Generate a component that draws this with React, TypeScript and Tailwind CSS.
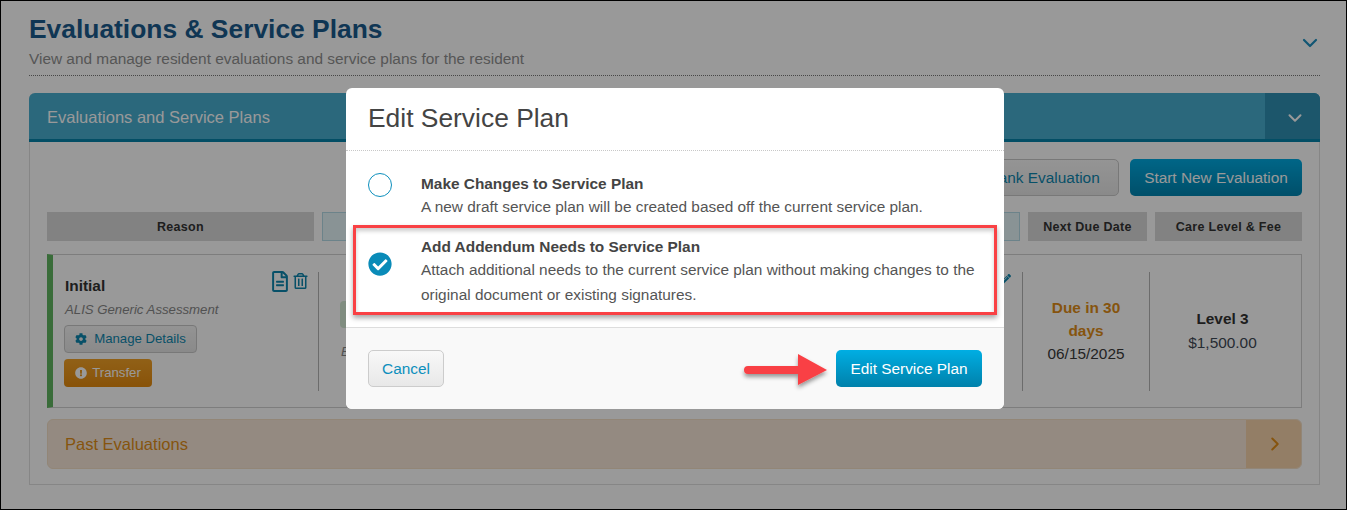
import React from 'react';
import { ChevronDown, ChevronRight } from 'lucide-react';
import { FaCheckCircle, FaCog, FaExclamationCircle, FaPencilAlt, FaRegFileAlt, FaRegTrashAlt } from 'react-icons/fa';

const HeaderCell = ({ className, children }: { className: string; children?: React.ReactNode }) => (
    <div className={`flex items-center justify-center bg-[#d9d9d9] pt-px text-[12.5px] font-bold tracking-[0.3px] text-[#333] ${className}`}>
        {children}
    </div>
);

const RedArrow = () => (
    <svg width="90" height="40" viewBox="0 0 90 40" className="absolute left-[740px] top-[349px] overflow-visible">
        <defs>
            <filter id="arrow-shadow" x="-20%" y="-40%" width="140%" height="200%">
                <feDropShadow dx="0" dy="3" stdDeviation="2" floodColor="#000" floodOpacity="0.4" />
            </filter>
        </defs>
        <path
            d="M7 16 H57 V4 L86 20 L57 35 V24 H7 A4 4 0 0 1 7 16 Z"
            fill="#f94144"
            filter="url(#arrow-shadow)"
        />
    </svg>
);

export default function App() {
    return (
        <div className="relative h-[510px] w-[1347px] overflow-hidden border border-black bg-white font-['Liberation_Sans',Arial,sans-serif] text-[#444]">
            {/* page behind the dialog */}
            <div className="pl-[28px] pr-[26px] pt-[12px]">
                <div className="relative border-b border-dotted border-[#777] pb-[6px]">
                    <h1 className="text-[26.4px] font-bold leading-[33px] text-[#1a5a8c]">Evaluations &amp; Service Plans</h1>
                    <p className="mt-[3px] text-[15.4px] leading-[20px] text-[#8f8f8f]">View and manage resident evaluations and service plans for the resident</p>
                    <ChevronDown className="absolute right-[-2px] top-[18px] h-[24px] w-[24px] text-[#1d8fc0]" strokeWidth={2.2} />
                </div>

                <div className="mt-[17px] h-[392px] rounded-t-[6px] border border-t-0 border-[#e0e0e0]">
                    <div className="-mx-px flex h-[49px] rounded-t-[6px] border-b-[3px] border-[#0583a8] bg-[#48adcf] text-white">
                        <div className="flex flex-1 items-center pl-[18px] pt-[2px] text-[16.5px]">Evaluations and Service Plans</div>
                        <div className="flex w-[55px] items-center justify-center rounded-tr-[6px] bg-[#2f8fb2]">
                            <ChevronDown className="ml-[5px] mt-[4px] h-[22px] w-[22px]" strokeWidth={2.2} />
                        </div>
                    </div>

                    <div className="px-[17px]">
                        <div className="mt-[17px] flex justify-end gap-[11px]">
                            <button className="h-[37px] w-[190px] rounded-[5px] border border-[#c8c8c8] bg-gradient-to-b from-[#f8f8f8] to-[#e6e6e6] text-[15.4px] text-[#0d86ae]">Start Blank Evaluation</button>
                            <button className="h-[37px] w-[172px] rounded-[5px] bg-gradient-to-b from-[#00aae2] to-[#0084b0] text-[15.4px] text-white">Start New Evaluation</button>
                        </div>

                        <div className="mt-[16px] flex h-[29px] gap-[8px]">
                            <HeaderCell className="w-[267px]">Reason</HeaderCell>
                            <HeaderCell className="flex-1 border border-[#b5dbe6] bg-[#e5f5f8]">Status</HeaderCell>
                            <HeaderCell className="w-[119px]">Next Due Date</HeaderCell>
                            <HeaderCell className="w-[147px]">Care Level &amp; Fee</HeaderCell>
                        </div>

                        <div className="mt-[13px] flex h-[154px] items-center border border-l-[6px] border-[#d0d0d0] border-l-[#5fb55f] pr-[9px]">
                            <div className="relative flex h-[119px] w-[266px] flex-col items-start border-r border-[#b5b5b5] pl-[12px]">
                                <div className="absolute right-[10px] top-[-1px] flex items-start gap-[5px] text-[#0d86ae]">
                                    <FaRegFileAlt className="h-[21px] w-[16px]" />
                                    <FaRegTrashAlt className="mt-[2px] h-[16px] w-[15px]" />
                                </div>
                                <div className="mt-[5px] text-[15.4px] font-bold leading-[18px] text-[#333]">Initial</div>
                                <div className="mt-[6px] text-[13.2px] italic leading-[18px] text-[#888]">ALIS Generic Assessment</div>
                                <button className="-ml-px mt-[6px] flex h-[28px] w-[133px] items-center justify-center gap-[7px] rounded-[4px] border border-[#c8c8c8] bg-gradient-to-b from-[#f6f6f6] to-[#e6e6e6] text-[13.2px] text-[#0d86ae]">
                                    <FaCog className="h-[12px] w-[12px]" />
                                    Manage Details
                                </button>
                                <button className="-ml-px mt-[6px] flex h-[28px] w-[88px] items-center justify-center gap-[5px] rounded-[4px] bg-gradient-to-b from-[#f1a126] to-[#e38a0d] text-[13.2px] text-white">
                                    <FaExclamationCircle className="h-[12px] w-[12px]" />
                                    Transfer
                                </button>
                            </div>
                            <div className="relative h-[119px] flex-1">
                                <div className="absolute right-[11px] top-[2px]">
                                    <FaPencilAlt className="h-[10px] w-[10px] text-[#0d86ae]" />
                                </div>
                                <div className="ml-[21px] mt-[29px] h-[27px] w-[60px] rounded-[4px] bg-[#d5ecd5]" />
                                <div className="ml-[22px] mt-[14px] text-[13.2px] italic text-[#888]">Evaluation</div>
                            </div>
                            <div className="flex h-[119px] w-[128px] flex-col items-center justify-center border-x border-[#b5b5b5] pb-[2px] text-center text-[15.4px] leading-[23px]">
                                <div className="font-bold text-[#e08d18]">Due in 30<br />days</div>
                                <div className="text-[#3a3a3a]">06/15/2025</div>
                            </div>
                            <div className="flex h-[119px] w-[142px] flex-col items-center justify-center pl-[3px] text-[15.4px] leading-[24px]">
                                <div className="font-bold text-[#333]">Level 3</div>
                                <div className="text-[#3f4a55]">$1,500.00</div>
                            </div>
                        </div>

                        <div className="mt-[11px] flex h-[50px] overflow-hidden rounded-[6px] border border-[#f3dfc6] bg-[#f7e7d7]">
                            <div className="flex flex-1 items-center pl-[17px] text-[16.5px] text-[#e08d18]">Past Evaluations</div>
                            <div className="flex w-[55px] items-center justify-center bg-[#f5d3ab]">
                                <ChevronRight className="ml-[2px] h-[22px] w-[22px] text-[#e08d18]" strokeWidth={2.2} />
                            </div>
                        </div>
                    </div>
                </div>
            </div>

            <div className="absolute inset-0 bg-black/40" />

            {/* dialog */}
            <div className="absolute left-[345px] top-[87px] flex h-[321px] w-[658px] flex-col overflow-hidden rounded-[6px] bg-white">
                <div className="flex h-[63px] items-center border-b border-dotted border-[#c8c8c8] px-[22px] text-[26.4px] text-[#444]">Edit Service Plan</div>
                <div className="flex h-[177px] flex-col border-b border-[#ddd]">
                    <div className="mt-[22px] flex items-start">
                        <div className="ml-[22px] h-[24px] w-[24px] rounded-full border border-[#0d8fbd]" />
                        <div className="ml-[29px]">
                            <div className="text-[15.4px] font-bold leading-[22px] text-[#444]">Make Changes to Service Plan</div>
                            <div className="text-[15.4px] leading-[24px] text-[#555]">A new draft service plan will be created based off the current service plan.</div>
                        </div>
                    </div>
                    <div className="mt-[17px] flex items-start">
                        <FaCheckCircle className="ml-[22px] mt-[16px] h-[24px] w-[24px] text-[#0a8bb8]" />
                        <div className="ml-[29px]">
                            <div className="text-[15.4px] font-bold leading-[22px] text-[#444]">Add Addendum Needs to Service Plan</div>
                            <div className="-mt-[1px] w-[570px] text-[15.4px] leading-[25px] text-[#555]">Attach additional needs to the current service plan without making changes to the original document or existing signatures.</div>
                        </div>
                    </div>
                </div>
                <div className="flex flex-1 items-center justify-between bg-[#f9f9f9] px-[22px]">
                    <button className="h-[37px] w-[76px] rounded-[5px] border border-[#ccc] bg-gradient-to-b from-[#f8f8f8] to-[#e8e8e8] text-[15.4px] text-[#0d8fbd]">Cancel</button>
                    <button className="h-[37px] w-[146px] rounded-[5px] bg-gradient-to-b from-[#00aee3] to-[#0081ab] text-[15.4px] text-white">Edit Service Plan</button>
                </div>
            </div>

            {/* annotations */}
            <div className="absolute left-[352px] top-[224px] h-[90px] w-[644px] border-[3px] border-[#f94144] shadow-[0_3px_5px_rgba(0,0,0,0.35),inset_0_3px_4px_rgba(0,0,0,0.2)]" />
            <RedArrow />
        </div>
    );
}
